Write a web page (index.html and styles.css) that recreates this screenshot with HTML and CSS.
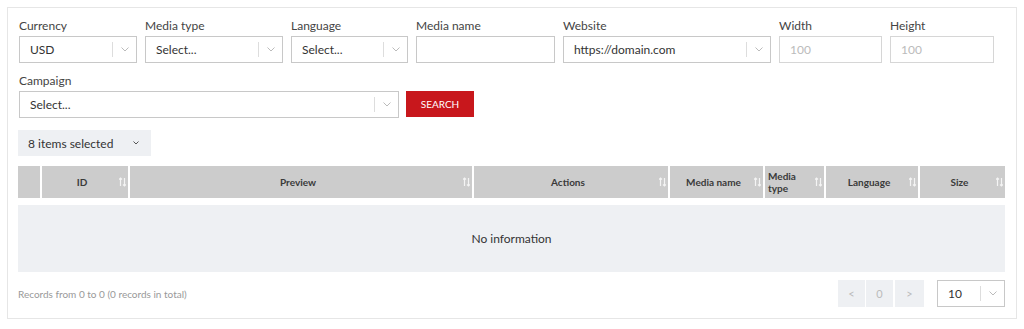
FILE: index.html
```html
<!DOCTYPE html>
<html lang="en">
<head>
  <meta charset="UTF-8">
  <title>Media | Search</title>
  <meta name="viewport" content="width=device-width, initial-scale=1.0">
  <link rel="stylesheet" href="styles.css">
</head>
<body>

  <div class="card">

    <!-- Filters -->
    <div class="filter-row">
      <div class="field w-currency">
        <label>Currency</label>
        <div class="select">
          <span class="value">USD</span>
          <span class="sep"></span>
          <span class="chev"><svg width="8" height="5" viewBox="0 0 8 5"><path d="M0.5 0.5 L4 4 L7.5 0.5" fill="none" stroke="#bbb" stroke-width="1"/></svg></span>
        </div>
      </div>
      <div class="field w-type">
        <label>Media type</label>
        <div class="select">
          <span class="value placeholder">Select...</span>
          <span class="sep"></span>
          <span class="chev"><svg width="8" height="5" viewBox="0 0 8 5"><path d="M0.5 0.5 L4 4 L7.5 0.5" fill="none" stroke="#bbb" stroke-width="1"/></svg></span>
        </div>
      </div>
      <div class="field w-lang">
        <label>Language</label>
        <div class="select">
          <span class="value placeholder">Select...</span>
          <span class="sep"></span>
          <span class="chev"><svg width="8" height="5" viewBox="0 0 8 5"><path d="M0.5 0.5 L4 4 L7.5 0.5" fill="none" stroke="#bbb" stroke-width="1"/></svg></span>
        </div>
      </div>
      <div class="field w-name">
        <label>Media name</label>
        <div class="input"></div>
      </div>
      <div class="field w-site">
        <label>Website</label>
        <div class="select">
          <span class="value">https://domain.com</span>
          <span class="sep"></span>
          <span class="chev"><svg width="8" height="5" viewBox="0 0 8 5"><path d="M0.5 0.5 L4 4 L7.5 0.5" fill="none" stroke="#bbb" stroke-width="1"/></svg></span>
        </div>
      </div>
      <div class="field w-width">
        <label>Width</label>
        <div class="input light"><span class="placeholder">100</span></div>
      </div>
      <div class="field w-height">
        <label>Height</label>
        <div class="input light"><span class="placeholder">100</span></div>
      </div>
    </div>

    <div class="filter-row second">
      <div class="field w-campaign">
        <label>Campaign</label>
        <div class="select">
          <span class="value placeholder">Select...</span>
          <span class="sep"></span>
          <span class="chev"><svg width="8" height="5" viewBox="0 0 8 5"><path d="M0.5 0.5 L4 4 L7.5 0.5" fill="none" stroke="#bbb" stroke-width="1"/></svg></span>
        </div>
      </div>
      <button class="search-btn">SEARCH</button>
    </div>

    <!-- Column picker -->
    <div class="columns-picker">
      <span>8 items selected</span>
      <svg width="6" height="4" viewBox="0 0 6 4"><path d="M0.5 0.5 L3 3 L5.5 0.5" fill="none" stroke="#555" stroke-width="1"/></svg>
    </div>

    <!-- Table -->
    <div class="table-head">
      <div class="th"></div>
      <div class="th">ID<span class="sort"></span></div>
      <div class="th">Preview<span class="sort"></span></div>
      <div class="th">Actions<span class="sort"></span></div>
      <div class="th">Media name<span class="sort"></span></div>
      <div class="th left">Media<br>type<span class="sort"></span></div>
      <div class="th">Language<span class="sort"></span></div>
      <div class="th">Size<span class="sort"></span></div>
    </div>
    <div class="table-empty">No information</div>

    <!-- Footer -->
    <div class="table-footer">
      <span class="records">Records from 0 to 0 (0 records in total)</span>
      <div class="pager">
        <span class="page-btn">&lt;</span>
        <span class="page-btn">0</span>
        <span class="page-btn wide">&gt;</span>
        <div class="select page-size">
          <span class="value">10</span>
          <span class="sep"></span>
          <span class="chev"><svg width="8" height="5" viewBox="0 0 8 5"><path d="M0.5 0.5 L4 4 L7.5 0.5" fill="none" stroke="#bbb" stroke-width="1"/></svg></span>
        </div>
      </div>
    </div>

  </div>

  <script>
    // sort arrows in table header
    document.querySelectorAll('.sort').forEach(function (el) {
      el.innerHTML = '<svg width="7" height="10" viewBox="0 0 7 10">' +
        '<path d="M1.5 9 V1 M0 2.5 L1.5 1 L3 2.5" fill="none" stroke="#f4f4f4" stroke-width="1.2"/>' +
        '<path d="M5.5 1 V9 M4 7.5 L5.5 9 L7 7.5" fill="none" stroke="#f4f4f4" stroke-width="1.2"/>' +
        '</svg>';
    });
  </script>
</body>
</html>
```

FILE: styles.css
```css
* {
  margin: 0;
  padding: 0;
  box-sizing: border-box;
}

body {
  font-family: 'Lato', 'Liberation Sans', sans-serif;
  background: #fff;
  color: #333;
  padding: 7px;
}

.card {
  width: 1010px;
  height: 312px;
  border: 1px solid #e6e6e6;
  padding: 10px 10px 0 10px;
}

.filter-row {
  display: flex;
  gap: 8px;
  padding-left: 1px;
}

.filter-row.second {
  margin-top: 10px;
  align-items: flex-end;
  gap: 7px;
}

.field label {
  display: block;
  font-size: 12px;
  line-height: 16px;
  color: #444;
  margin-bottom: 2px;
}

.w-currency { width: 118px; }
.w-type { width: 138px; }
.w-lang { width: 117px; }
.w-name { width: 139px; }
.w-site { width: 208px; }
.w-width { width: 103px; }
.w-height { width: 104px; }
.w-campaign { width: 380px; }

.select,
.input {
  height: 27px;
  border: 1px solid #c8c8c8;
  background: #fff;
  display: flex;
  align-items: center;
  font-size: 12px;
}

.input.light {
  border-color: #d6d6d6;
}

.select .value {
  flex: 1;
  padding-left: 10px;
  color: #333;
  white-space: nowrap;
}

.placeholder {
  color: #999;
}

.input .placeholder {
  padding-left: 10px;
  color: #bbb;
}

.select .sep {
  width: 1px;
  height: 15px;
  background: #ddd;
}

.select .chev {
  width: 23px;
  display: flex;
  justify-content: center;
}

.search-btn {
  width: 68px;
  height: 26px;
  margin-bottom: 1px;
  background: #c8171c;
  border: none;
  color: #fff;
  font-family: inherit;
  font-size: 10px;
}

.columns-picker {
  margin-top: 12px;
  width: 133px;
  height: 26px;
  background: #eef0f3;
  display: flex;
  align-items: center;
  justify-content: space-between;
  padding: 0 12px 0 10px;
  font-size: 12px;
  color: #333;
}

.table-head {
  margin-top: 10px;
  width: 987px;
  height: 32px;
  display: grid;
  grid-template-columns: 22px 86px 342px 194px 93px 59px 92px 1fr;
  gap: 2px;
  background: #fff;
}

.th {
  background: #cccccc;
  position: relative;
  display: flex;
  align-items: center;
  justify-content: center;
  font-size: 10px;
  font-weight: bold;
  color: #3a3a3a;
  line-height: 12px;
  padding-right: 6px;
}

.th.left {
  justify-content: flex-start;
  padding-left: 3px;
}

.th .sort {
  position: absolute;
  right: 2px;
  top: 11px;
  display: flex;
}

.table-empty {
  margin-top: 7px;
  width: 987px;
  height: 67px;
  background: #eef0f3;
  display: flex;
  align-items: center;
  justify-content: center;
  font-size: 12px;
  color: #333;
}

.table-footer {
  margin-top: 8px;
  width: 987px;
  display: flex;
  align-items: center;
  justify-content: space-between;
}

.records {
  font-size: 10px;
  color: #999;
}

.pager {
  display: flex;
  align-items: center;
  gap: 1px;
}

.page-btn {
  width: 27px;
  height: 27px;
  background: #eef0f3;
  color: #bbb;
  font-size: 11px;
  display: flex;
  align-items: center;
  justify-content: center;
}

.page-btn.wide {
  width: 29px;
  margin-left: 1px;
}

.page-size {
  width: 68px;
  margin-left: 12px;
}
```
